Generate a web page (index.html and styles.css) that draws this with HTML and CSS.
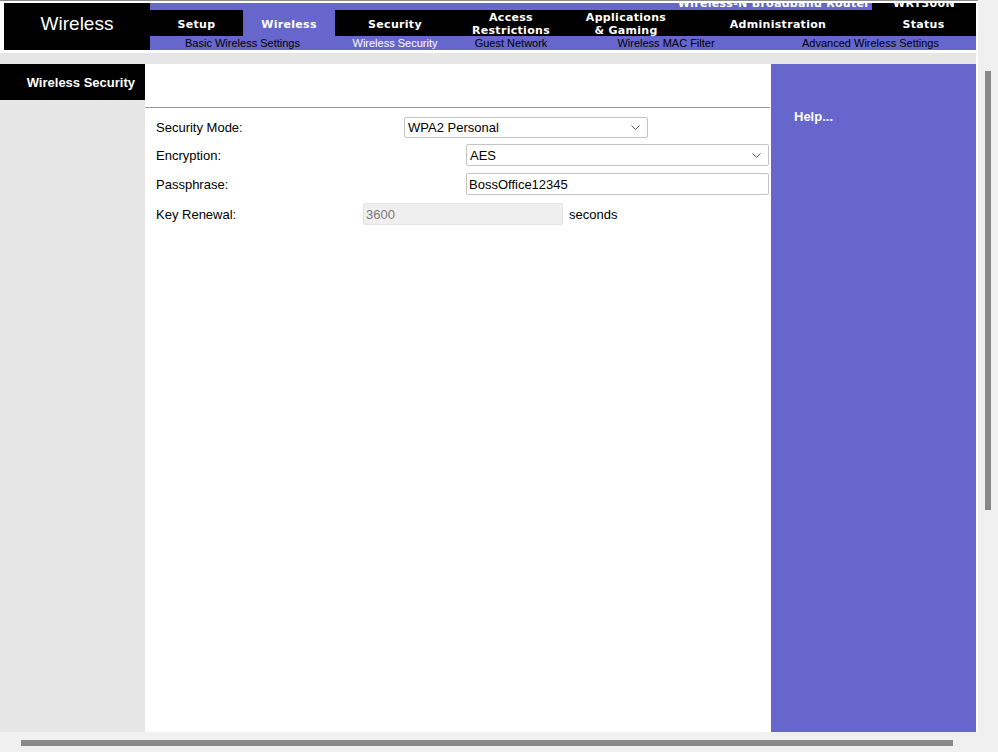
FILE: index.html
```html
<!DOCTYPE html>
<html lang="en">
<head>
<meta charset="utf-8">
<title>Wireless Security</title>
<link rel="stylesheet" href="styles.css">
</head>
<body>
<div class="window">
  <div class="page">
    <header class="header">
      <div class="title">Wireless</div>
      <nav class="nav">
        <div class="nav-top">
          <div class="product">Wireless-N Broadband Router</div>
          <div class="model">WRT300N</div>
        </div>
        <div class="tabs">
          <div class="tab w-setup">Setup</div>
          <div class="tab w-wireless active">Wireless</div>
          <div class="tab w-security">Security</div>
          <div class="tab w-access">Access<br>Restrictions</div>
          <div class="tab w-apps">Applications<br>&amp; Gaming</div>
          <div class="tab w-admin">Administration</div>
          <div class="tab w-status">Status</div>
        </div>
        <div class="subtabs">
          <div class="sub s-basic">Basic Wireless Settings</div>
          <div class="sub s-sec active">Wireless Security</div>
          <div class="sub s-guest">Guest Network</div>
          <div class="sub s-mac">Wireless MAC Filter</div>
          <div class="sub s-adv">Advanced Wireless Settings</div>
        </div>
      </nav>
    </header>
    <div class="band"></div>
    <div class="main">
      <aside class="side">
        <div class="side-title">Wireless Security</div>
      </aside>
      <section class="content">
        <div class="rule"></div>
        <form class="form">
          <div class="row">
            <label class="label">Security Mode:</label>
            <div class="select sel1">
              <select><option>WPA2 Personal</option></select>
              <svg class="chev" width="9" height="5" viewBox="0 0 9 5"><path d="M0.5 0.5 L4.5 4.5 L8.5 0.5" fill="none" stroke="#555" stroke-width="1"/></svg>
            </div>
          </div>
          <div class="row row-2">
            <label class="label">Encryption:</label>
            <div class="select sel2">
              <select><option>AES</option></select>
              <svg class="chev" width="9" height="5" viewBox="0 0 9 5"><path d="M0.5 0.5 L4.5 4.5 L8.5 0.5" fill="none" stroke="#555" stroke-width="1"/></svg>
            </div>
          </div>
          <div class="row row-3">
            <label class="label">Passphrase:</label>
            <input class="text pass" type="text" value="BossOffice12345">
          </div>
          <div class="row row-4">
            <label class="label">Key Renewal:</label>
            <input class="text key" type="text" value="3600" disabled>
            <span class="unit">seconds</span>
          </div>
        </form>
      </section>
      <aside class="help">
        <p class="help-title">Help...</p>
      </aside>
    </div>
  </div>
  <div class="vscroll"><div class="vthumb"></div></div>
  <div class="hscroll"><div class="hthumb"></div></div>
  <div class="corner"></div>
</div>
</body>
</html>
```

FILE: styles.css
```css
* { box-sizing: border-box; }

body {
  margin: 0;
  font-family: "Liberation Sans", Arial, sans-serif;
  background: #fff;
}

.window {
  width: 998px;
  height: 752px;
  display: grid;
  grid-template-columns: 978px 20px;
  grid-template-rows: 732px 20px;
  overflow: hidden;
}

.page {
  background: #fff;
  border-top: 1px solid #8a8a8a;
  padding-right: 2px;
  display: flex;
  flex-direction: column;
  overflow: hidden;
}

/* Header */
.header {
  margin: 2px 0 0 4px;
  height: 47px;
  background: #000;
  display: flex;
}

.title {
  width: 146px;
  color: #fff;
  font-size: 19px;
  display: flex;
  align-items: center;
  justify-content: center;
  padding-bottom: 6px;
}

.nav {
  width: 826px;
  display: flex;
  flex-direction: column;
}

.nav-top {
  height: 7px;
  display: flex;
  overflow: hidden;
  font-family: "DejaVu Sans", Verdana, sans-serif;
  font-weight: bold;
  font-size: 11px;
  line-height: 12px;
  color: #fff;
  letter-spacing: 0.3px;
}

.product {
  width: 722px;
  margin-top: -5px;
  height: 12px;
  background: #6666cc;
  text-align: right;
  padding-right: 2px;
}

.model {
  width: 104px;
  margin-top: -5px;
  height: 12px;
  background: #000;
  text-align: center;
}

.tabs {
  height: 26px;
  display: flex;
}

.tab {
  height: 26px;
  padding-top: 2px;
  display: flex;
  align-items: center;
  justify-content: center;
  text-align: center;
  color: #fff;
  font-family: "DejaVu Sans", Verdana, sans-serif;
  font-weight: bold;
  font-size: 11px;
  line-height: 13px;
  letter-spacing: 0.3px;
}

.tab.active { background: #6666cc; }

.w-setup { width: 93px; }
.w-wireless { width: 92px; }
.w-security { width: 120px; }
.w-access { width: 112px; }
.w-apps { width: 118px; }
.w-admin { width: 186px; }
.w-status { width: 105px; }

.subtabs {
  height: 14px;
  display: flex;
  background: #6666cc;
}

.sub {
  font-size: 11px;
  line-height: 14px;
  text-align: center;
  color: #000;
}

.sub.active { color: #fff; }

.s-basic { width: 185px; }
.s-sec { width: 120px; }
.s-guest { width: 112px; }
.s-mac { width: 198px; }
.s-adv { width: 211px; }

.band {
  margin-top: 3px;
  height: 11px;
  background: #e6e6e6;
}

/* Main */
.main {
  flex: 1;
  display: flex;
}

.side {
  width: 145px;
  background: #e6e6e6;
}

.side-title {
  height: 36px;
  padding-top: 1px;
  background: #000;
  color: #fff;
  font-weight: bold;
  font-size: 13px;
  line-height: 35px;
  text-align: right;
  padding-right: 10px;
}

.content {
  width: 626px;
  background: #fff;
}

.rule {
  margin-top: 43px;
  margin-right: 1px;
  border-top: 1px solid #9a9a9a;
}

.form {
  margin: 8px 0 0 0;
  padding-left: 11px;
  display: flex;
  flex-direction: column;
}

.row {
  height: 22px;
  display: flex;
  align-items: center;
  font-size: 13px;
  color: #000;
}

.row-2 { margin-top: 6px; }
.row-3 { margin-top: 7px; }
.row-4 { margin-top: 8px; }

.label {
  width: 207px;
  flex: none;
}

.select {
  position: relative;
  flex: none;
}

.select select {
  appearance: none;
  -webkit-appearance: none;
  width: 100%;
  height: 100%;
  border: 1px solid #c4c4c4;
  border-radius: 2px;
  background: #fff;
  font-family: "Liberation Sans", Arial, sans-serif;
  font-size: 13px;
  color: #000;
  padding: 0 0 0 3px;
  margin: 0;
  outline: none;
}

.chev {
  position: absolute;
  right: 8px;
  top: 50%;
  margin-top: -2px;
}

.sel1 {
  width: 244px;
  height: 21px;
  margin-left: 41px;
}

.sel2 {
  width: 303px;
  height: 22px;
  margin-left: 103px;
}

.text {
  flex: none;
  height: 22px;
  border: 1px solid #c4c4c4;
  border-radius: 2px;
  font-family: "Liberation Sans", Arial, sans-serif;
  font-size: 13px;
  color: #000;
  padding: 0 0 0 2px;
  margin: 0;
  background: #fff;
  outline: none;
}

.pass {
  width: 303px;
  margin-left: 103px;
}

.key {
  width: 200px;
  background: #efefef;
  border-color: #e2e2e2;
  color: #7a7a7a;
}

.unit {
  margin-left: 6px;
}

.help {
  width: 205px;
  background: #6666cc;
}

.help-title {
  margin: 0;
  padding: 45px 0 0 23px;
  color: #fff;
  font-weight: bold;
  font-size: 13px;
  line-height: 15px;
}

/* Scrollbars */
.vscroll {
  background: #f0f0f0;
  padding: 71px 7px 0 7px;
}

.vthumb {
  height: 439px;
  background: #888;
}

.hscroll {
  background: #f0f0f0;
  padding: 8px 0 0 21px;
}

.hthumb {
  width: 932px;
  height: 6px;
  background: #888;
}

.corner {
  background: #f0f0f0;
}
```
